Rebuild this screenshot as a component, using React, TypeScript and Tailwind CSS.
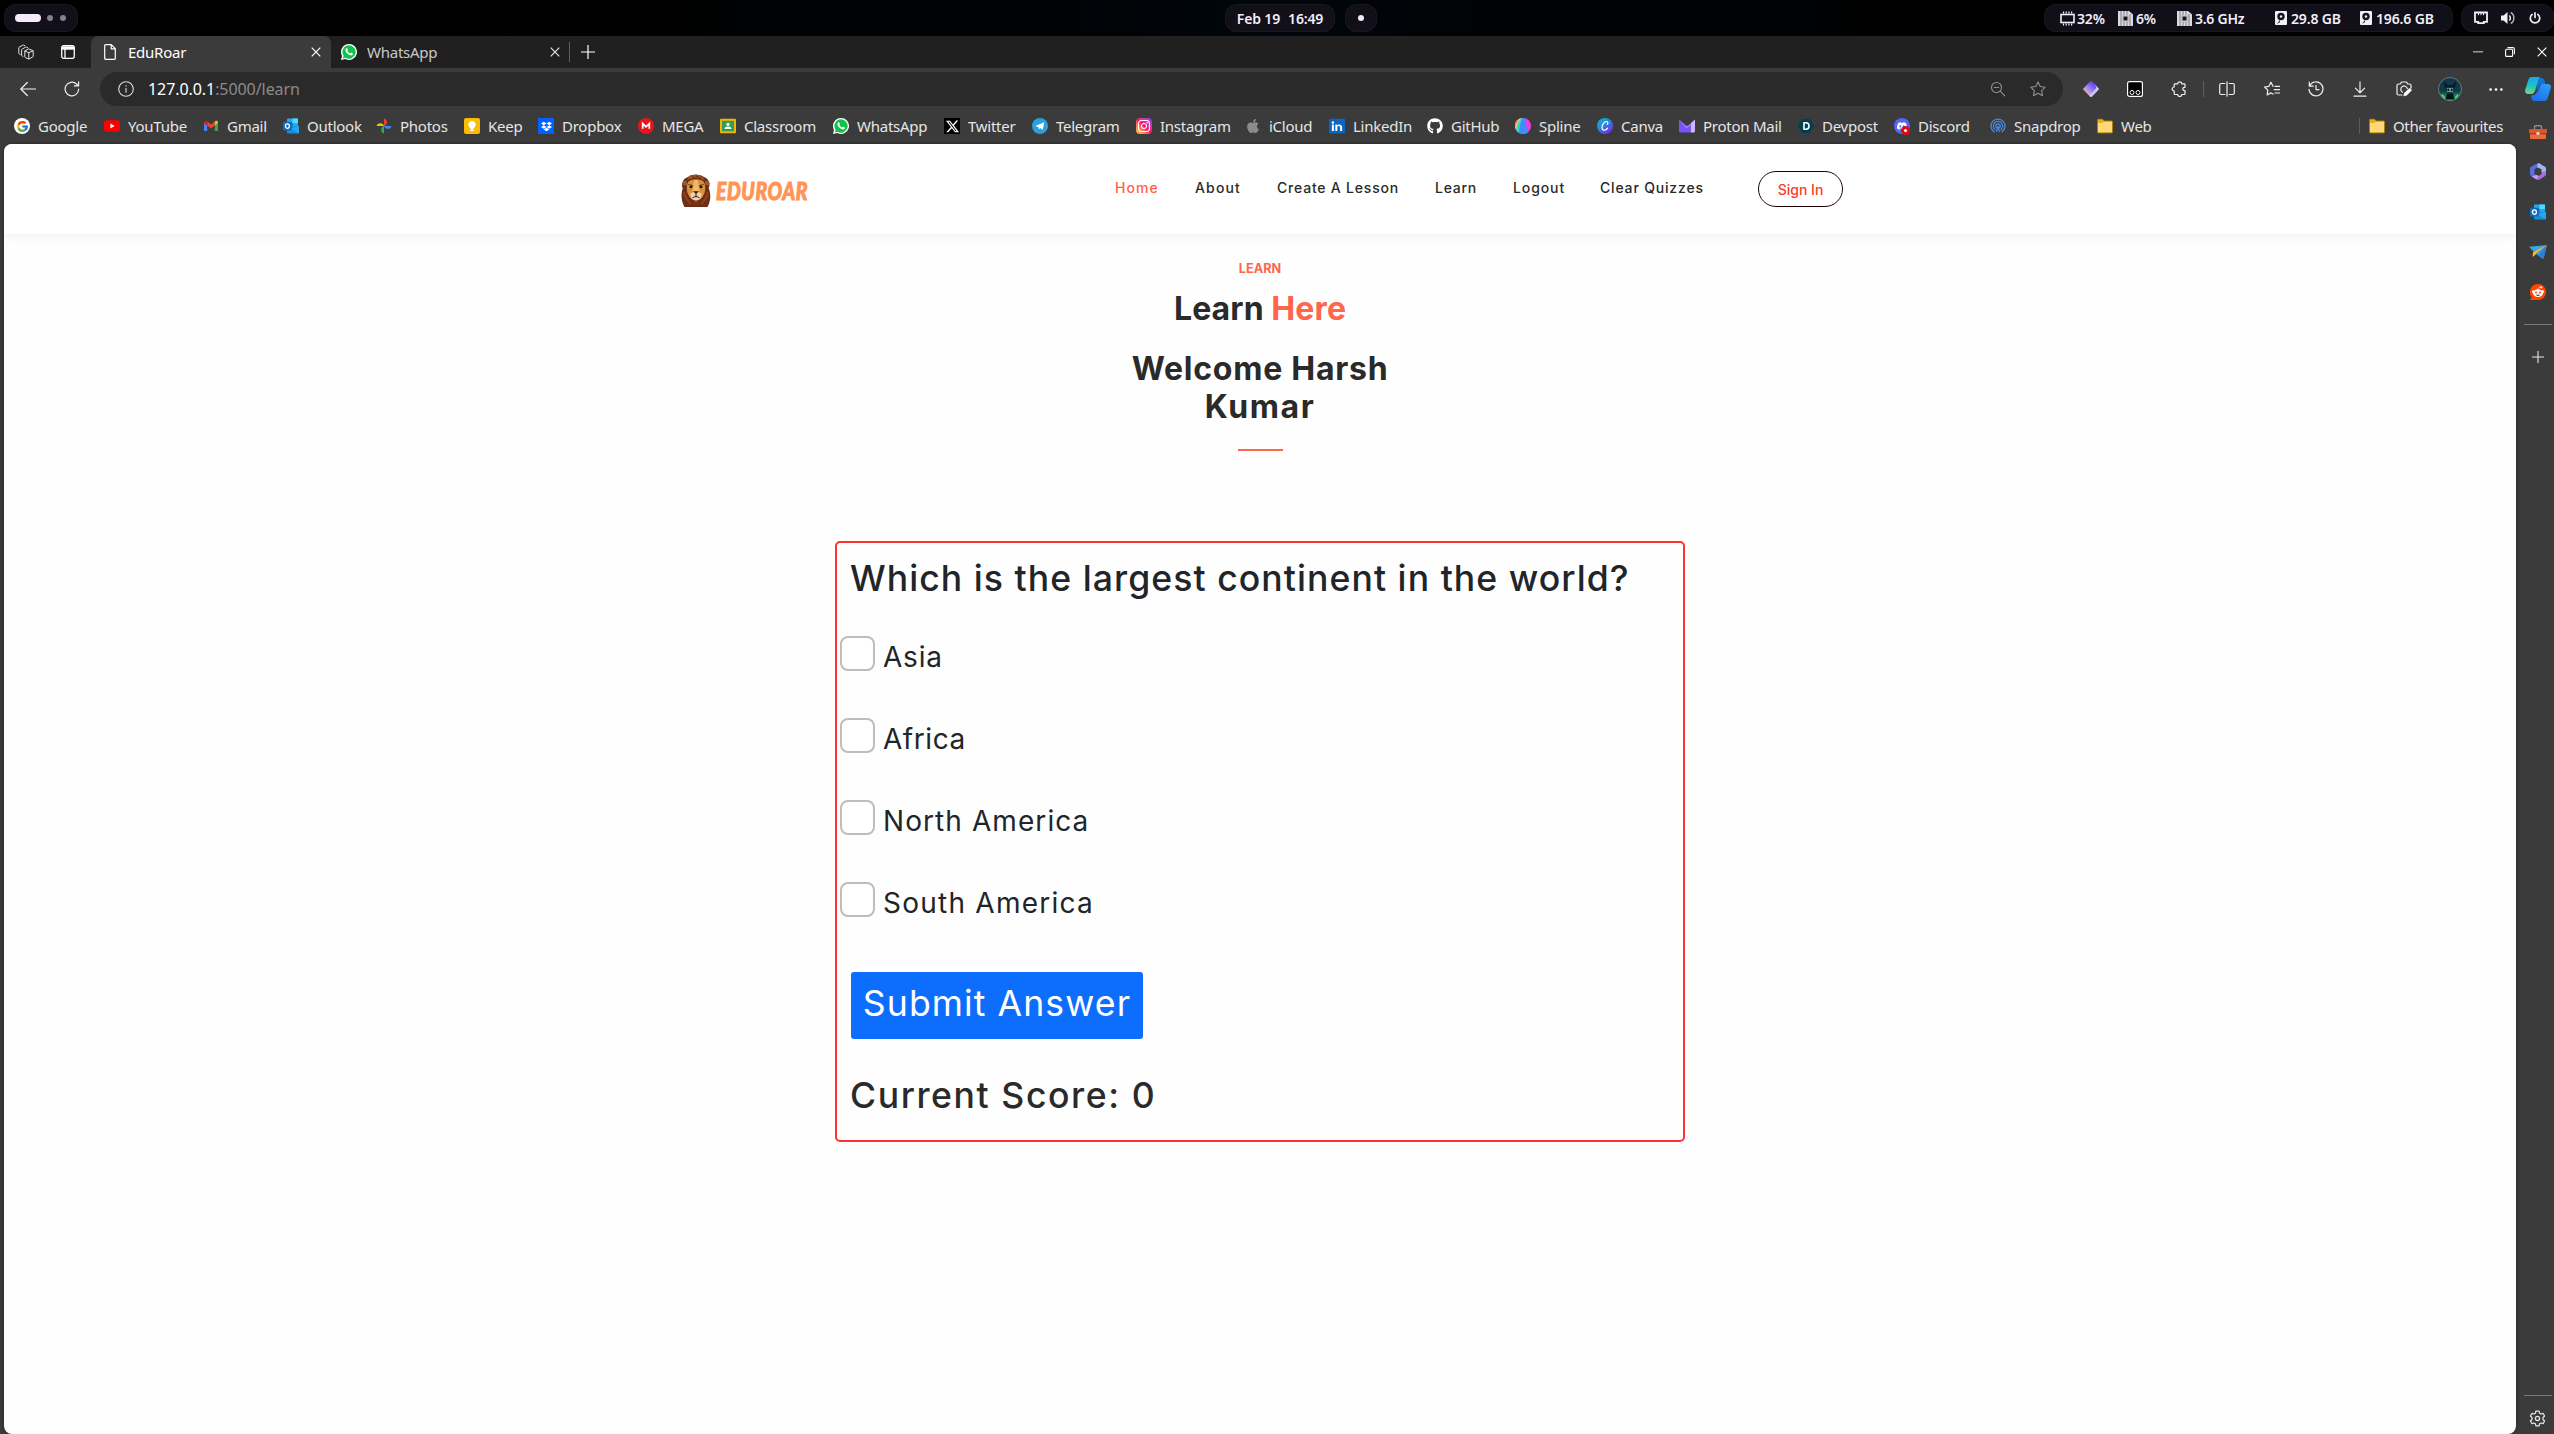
import type { ReactNode } from "react";
import { FcGoogle } from "react-icons/fc";
import { FaApple, FaGithub } from "react-icons/fa";
import { SiDropbox, SiX, SiInstagram, SiDiscord } from "react-icons/si";

/* ---------- generic stroke icon ---------- */
function Line({ children, size = "size-4", w = 1.2, className = "" }: { children: ReactNode; size?: string; w?: number; className?: string }) {
  return (
    <svg viewBox="0 0 16 16" fill="none" stroke="currentColor" strokeWidth={w} strokeLinecap="round" strokeLinejoin="round" className={`${size} shrink-0 ${className}`}>
      {children}
    </svg>
  );
}

/* ---------- brand icons ---------- */
const GoogleIcon = () => (
  <span className="flex size-4 items-center justify-center rounded-full bg-white">
    <FcGoogle className="size-[13px]" />
  </span>
);
const YouTubeIcon = () => (
  <svg viewBox="0 0 16 16" className="size-4">
    <rect y="2.2" width="16" height="11.6" rx="3" fill="#f00" />
    <path d="M6.4 5.6 10.6 8l-4.2 2.4z" fill="#fff" />
  </svg>
);
const GmailIcon = () => (
  <svg viewBox="0 0 16 16" className="size-4">
    <path d="M1 4v8.2c0 .6.4.9.9.9h2.3V7z" fill="#4285f4" />
    <path d="M15 4v8.2c0 .6-.4.9-.9.9h-2.3V7z" fill="#34a853" />
    <path d="M4.2 7.4V3.6L8 6.6l3.8-3v3.8L8 10.4z" fill="#ea4335" />
    <path d="M1 4.2c0-1.6 1.6-2 2.6-1.1l.6.5v3.8L1 5z" fill="#c5221f" />
    <path d="M15 4.2c0-1.6-1.6-2-2.6-1.1l-.6.5v3.8L15 5z" fill="#fbbc04" />
  </svg>
);
const OutlookIcon = ({ size = "size-4" }: { size?: string }) => (
  <svg viewBox="0 0 16 16" className={size}>
    <rect x="4" y="0.5" width="11" height="9" rx="0.8" fill="#28a8ea" />
    <rect x="9.5" y="0.5" width="5.5" height="4.5" fill="#50d9ff" />
    <rect x="4" y="5" width="5.5" height="4.5" fill="#0364b8" />
    <path d="M4 8.5 16 8v6.4c0 .7-.5 1.1-1.1 1.1H5.1c-.6 0-1.1-.4-1.1-1.1z" fill="#1490df" />
    <path d="M16 8v6.4c0 .3-.1.6-.3.8L7.5 10.6z" fill="#28a8ea" />
    <rect y="3.7" width="8.8" height="8.8" rx="0.8" fill="#0f6cbd" />
    <ellipse cx="4.4" cy="8.1" rx="2" ry="2.2" fill="none" stroke="#fff" strokeWidth="1.3" />
  </svg>
);
const PhotosIcon = () => (
  <svg viewBox="0 0 16 16" className="size-4">
    <path d="M8 8V.5A3.900 3.900 0 0 1 8 8z" fill="#ea4335" />
    <path d="M8 8h7.500A3.900 3.900 0 0 1 8 8z" fill="#4285f4" />
    <path d="M8 8v7.500A3.900 3.900 0 0 1 8 8z" fill="#34a853" />
    <path d="M8 8H.5A3.900 3.900 0 0 1 8 8z" fill="#fbbc04" />
  </svg>
);
const KeepIcon = () => (
  <svg viewBox="0 0 16 16" className="size-4">
    <rect width="16" height="16" rx="2" fill="#fbbc04" />
    <circle cx="8" cy="6.6" r="3.6" fill="#fff" />
    <rect x="6.1" y="9" width="3.8" height="1.8" fill="#fff" />
    <rect x="6.1" y="11.5" width="3.8" height="1.4" fill="#fff" />
  </svg>
);
const DropboxIcon = () => (
  <span className="flex size-4 items-center justify-center bg-[#0061ff]">
    <SiDropbox className="size-[11px] text-white" />
  </span>
);
const MegaIcon = () => (
  <svg viewBox="0 0 16 16" className="size-4">
    <circle cx="8" cy="8" r="8" fill="#e8141b" />
    <path d="M4.7 10.8V5.6L8 8.8l3.3-3.2v5.2" fill="none" stroke="#fff" strokeWidth="1.7" />
  </svg>
);
const ClassroomIcon = () => (
  <svg viewBox="0 0 16 16" className="size-4">
    <rect y="0.8" width="16" height="14.4" rx="1" fill="#f4b400" />
    <rect x="2" y="2.8" width="12" height="10.4" fill="#2f9e5b" />
    <circle cx="8" cy="6.3" r="1.6" fill="#fff" />
    <path d="M4.6 11c0-1.6 1.6-2.4 3.4-2.4s3.4.8 3.4 2.4z" fill="#fff" />
  </svg>
);
const WhatsAppIcon = () => (
  <svg viewBox="0 0 16 16" className="size-4">
    <path d="M8 0a8 8 0 1 1-3.7 15.1L0 16l1-4.1A8 8 0 0 1 8 0z" fill="#fff" />
    <path d="M8 1.3a6.7 6.7 0 1 1-3.4 12.5l-2.7.6.7-2.6A6.7 6.7 0 0 1 8 1.3z" fill="#12c24b" />
    <path d="M5.7 4.2c.4 0 .5.1.6.4l.6 1.3c0 .5-.7.8-.6 1.1.6 1.2 1.5 2 2.7 2.5.4.1.8-.9 1.2-.9l1.5.8c.5.3.1 1.3-.5 1.7-1 .7-2.9.1-4.6-1.3C5 8.400 4.200 6.700 4.500 5.500c.2-.7.7-1.300 1.200-1.300z" fill="#fff" />
  </svg>
);
const TwitterIcon = () => (
  <span className="flex size-4 items-center justify-center bg-black">
    <SiX className="size-[13px] text-white" />
  </span>
);
const TelegramIcon = () => (
  <svg viewBox="0 0 16 16" className="size-4">
    <circle cx="8" cy="8" r="8" fill="#2ba0da" />
    <path d="M3.300 7.900 12.200 4.200 10.800 12 8.200 10.100 6.900 11.400 6.500 9.200z" fill="#fff" />
  </svg>
);
const InstagramIcon = () => (
  <span className="flex size-4 items-center justify-center rounded-[4px] bg-gradient-to-tr from-[#ffc800] via-[#ff0069] to-[#8a1cf6]">
    <SiInstagram className="size-[12px] text-white" />
  </span>
);
const AppleIcon = () => <FaApple className="size-4 text-[#8b8b8b]" />;
const LinkedInIcon = () => (
  <svg viewBox="0 0 16 16" className="size-4">
    <rect y="0.8" width="16" height="14.8" rx="1" fill="#0a66c2" />
    <circle cx="3.900" cy="4.500" r="1.200" fill="#fff" />
    <path d="M2.900 6.500h2V13h-2zM6.300 6.500h1.900v1c.9-1.700 4.900-1.700 4.900 1.800V13h-2V9.700c0-2.200-2.800-2-2.800 0V13h-2z" fill="#fff" />
  </svg>
);
const GitHubIcon = () => <FaGithub className="size-4 text-white" />;
const SplineIcon = () => (
  <svg viewBox="0 0 16 16" className="size-4">
    <defs>
      <clipPath id="splineClip"><circle cx="8" cy="8" r="8" /></clipPath>
    </defs>
    <g clipPath="url(#splineClip)">
      <rect width="16" height="16" fill="#f03ce0" />
      <path d="M6 0h4l3 16H4z" fill="#3f8cff" />
      <path d="M5 0h2.500C5 5 4 10 4 16H0V0z" fill="#35d8d0" />
      <path d="M4 0h2C3 4 1.500 8 1 12l-1-2V0z" fill="#ffd23c" />
      <path d="M3 0h1.500C2 4 1 6 0 9V0z" fill="#ff5f9e" />
    </g>
  </svg>
);
const CanvaIcon = () => (
  <svg viewBox="0 0 16 16" className="size-4">
    <defs>
      <linearGradient id="canva" x1="0" y1="0" x2="0.7" y2="1">
        <stop offset="0" stopColor="#00c4cc" />
        <stop offset="0.55" stopColor="#2f7fe0" />
        <stop offset="1" stopColor="#7d2ae8" />
      </linearGradient>
    </defs>
    <circle cx="8" cy="8" r="8" fill="url(#canva)" />
    <path d="M10.300 6.300c.9-.8.8-2.800-.7-2.800-2.200 0-4.600 3-4.600 5.800 0 3.800 3.700 3.700 5.600.9" fill="none" stroke="#fff" strokeWidth="1.200" strokeLinecap="round" />
  </svg>
);
const ProtonIcon = () => (
  <svg viewBox="0 0 16 16" className="size-4">
    <path d="M0 1.500 7.200 8 12 6v8.500H1.500C.6 14.500 0 13.900 0 13z" fill="#7a52f5" />
    <path d="M0 1.500 6.600 7.600c.8.8 2 .8 2.800 0L16 1.500l-4 5.800-4.600 3.200z" fill="#9d7dff" />
    <path d="M12 5.200 16 1.500V13c0 .9-.6 1.500-1.500 1.500H12z" fill="#c9b8ff" />
  </svg>
);
const DevpostIcon = () => (
  <svg viewBox="0 0 16 16" className="size-4">
    <path d="M4.200 1h7.600L16 8l-4.200 7H4.200L0 8z" fill="#003e54" />
    <path d="M6 4.800h1.900c2.100 0 3.100 1.300 3.100 3.200s-1 3.200-3.100 3.200H6z" fill="none" stroke="#fff" strokeWidth="1.600" />
  </svg>
);
const DiscordIcon = () => (
  <span className="relative flex size-4 items-center justify-center rounded-full bg-[#5865f2]">
    <SiDiscord className="size-[10px] text-white" />
    <span className="absolute right-0 -bottom-px flex size-[9px] items-center justify-center rounded-full bg-[#e00b12]">
      <span className="size-[3px] rounded-full bg-white" />
    </span>
  </span>
);
const SnapdropIcon = () => (
  <svg viewBox="0 0 16 16" fill="none" stroke="#4a8be6" strokeWidth="1.200" strokeLinecap="round" className="size-4">
    <path d="M4 13.800a7 7 0 1 1 8 0" />
    <path d="M5 11.500a4.600 4.600 0 1 1 6 0" />
    <path d="M6.400 9.600a2.200 2.200 0 1 1 3.200 0" />
    <path d="M7.900 8.400 6.600 13.500M8.100 8.400l1.300 5.100" />
  </svg>
);
const FolderIcon = () => (
  <svg viewBox="0 0 16 16" className="size-4">
    <path d="M.5 14V2.200c0-.5.400-.9.900-.9h4.200l1.600 1.700h7.300c.6 0 1 .4 1 1V14c0 .5-.4.900-.9.900H1.400c-.5 0-.9-.4-.9-.9z" fill="#ffd977" stroke="#a87c0c" />
    <path d="M1 5V2.300c0-.3.200-.5.500-.5h4l1.500 1.700L5.600 5z" fill="#e8b016" />
  </svg>
);

const bookmarks: { label: string; icon: () => ReactNode; w: string }[] = [
  { label: "Google", icon: GoogleIcon, w: "w-[90px]" },
  { label: "YouTube", icon: YouTubeIcon, w: "w-[99px]" },
  { label: "Gmail", icon: GmailIcon, w: "w-[80px]" },
  { label: "Outlook", icon: OutlookIcon, w: "w-[93px]" },
  { label: "Photos", icon: PhotosIcon, w: "w-[88px]" },
  { label: "Keep", icon: KeepIcon, w: "w-[74px]" },
  { label: "Dropbox", icon: DropboxIcon, w: "w-[100px]" },
  { label: "MEGA", icon: MegaIcon, w: "w-[82px]" },
  { label: "Classroom", icon: ClassroomIcon, w: "w-[113px]" },
  { label: "WhatsApp", icon: WhatsAppIcon, w: "w-[111px]" },
  { label: "Twitter", icon: TwitterIcon, w: "w-[88px]" },
  { label: "Telegram", icon: TelegramIcon, w: "w-[104px]" },
  { label: "Instagram", icon: InstagramIcon, w: "w-[109px]" },
  { label: "iCloud", icon: AppleIcon, w: "w-[84px]" },
  { label: "LinkedIn", icon: LinkedInIcon, w: "w-[98px]" },
  { label: "GitHub", icon: GitHubIcon, w: "w-[88px]" },
  { label: "Spline", icon: SplineIcon, w: "w-[82px]" },
  { label: "Canva", icon: CanvaIcon, w: "w-[82px]" },
  { label: "Proton Mail", icon: ProtonIcon, w: "w-[119px]" },
  { label: "Devpost", icon: DevpostIcon, w: "w-[96px]" },
  { label: "Discord", icon: DiscordIcon, w: "w-[96px]" },
  { label: "Snapdrop", icon: SnapdropIcon, w: "w-[107px]" },
  { label: "Web", icon: FolderIcon, w: "w-[60px]" },
];

/* ---------- desktop bar ---------- */
const MemoryIcon = () => (
  <svg viewBox="0 0 15 15" className="size-[15px]" fill="none" stroke="#f2eef8">
    <rect x="1" y="3.500" width="13" height="8" strokeWidth="1.600" />
    <path d="M3.500 0.500v2M6.200 0.500v2M8.900 0.500v2M11.600 0.500v2M3.500 12.500v2M6.200 12.500v2M8.900 12.500v2M11.600 12.500v2" strokeWidth="1.200" />
  </svg>
);
const CpuIcon = () => (
  <svg viewBox="0 0 15 15" className="size-[15px]">
    <path d="M0 0h11l4 3.500V15H0z" fill="#dcd9e0" />
    <path d="M3 0v15M6 0v4M9 0v4M12 3v12M6 11v4M9 11v4" stroke="#77747c" strokeWidth="0.900" />
    <rect x="4.500" y="4.500" width="6" height="6" fill="#a9a6ae" />
    <rect x="5.700" y="5.700" width="3.600" height="3.600" fill="#15131b" />
  </svg>
);
const DiskIcon = () => (
  <svg viewBox="0 0 12 14" className="h-[14px] w-3">
    <rect width="12" height="14" rx="1" fill="#f2eef8" />
    <circle cx="6" cy="5.500" r="3.700" fill="#15131b" />
    <circle cx="6" cy="5.500" r="1.200" fill="#f2eef8" />
    <path d="M2 13l3-4v2z" fill="#15131b" />
  </svg>
);

const pill = "flex h-7 items-center rounded-[12px] bg-[#110f18] ring-1 ring-[#19171f] ring-inset";

function DesktopBar() {
  return (
    <div className="flex h-9 items-center bg-gradient-to-r from-black via-[#00060b] to-black text-[14px] font-semibold text-[#f2eef8]">
      <div className={`${pill} ml-1 w-[74px] pl-[11px]`}>
        <span className="h-2 w-[26px] rounded-full bg-[#f4eafc]" />
        <span className="ml-[6px] size-[6px] rounded-full bg-[#85818d]" />
        <span className="ml-[7px] size-[6px] rounded-full bg-[#85818d]" />
      </div>
      <div className={`${pill} ml-[1147px] w-[110px] justify-center gap-2 tracking-[-0.15px]`}>
        <span>Feb 19</span>
        <span>16:49</span>
      </div>
      <div className={`${pill} ml-[10px] w-8 justify-center`}>
        <span className="size-[6px] rounded-full bg-[#f4eafc]" />
      </div>
      <div className={`${pill} ml-auto w-[409px] pl-4 tracking-[-0.15px]`}>
        <div className="flex w-[58px] items-center gap-[2px]"><MemoryIcon />32%</div>
        <div className="flex w-[59px] items-center gap-[3px]"><CpuIcon />6%</div>
        <div className="flex w-[98px] items-center gap-[3px] tracking-[-0.25px]"><CpuIcon />3.6 GHz</div>
        <div className="flex w-[85px] items-center gap-1"><DiskIcon />29.8 GB</div>
        <div className="flex items-center gap-1"><DiskIcon />196.6 GB</div>
      </div>
      <div className={`${pill} ml-2 w-[93px] pl-[13px]`}>
        <svg viewBox="0 0 14 14" className="size-[14px]" fill="none" stroke="#f2eef8" strokeWidth="1.800">
          <path d="M1 1.500h12v9.300H9.800v1.400H4.200v-1.400H1z" />
          <path d="M4.500 2v2.200M7 2v2.200M9.500 2v2.200" strokeWidth="1" />
        </svg>
        <svg viewBox="0 0 14 14" className="ml-[13px] size-[14px]" fill="none" stroke="#f2eef8" strokeWidth="1.500">
          <path d="M0 4.500h2.500L6.500 1v12L2.500 9.500H0z" fill="#f2eef8" stroke="none" />
          <path d="M8.300 4.500a3.500 3.500 0 0 1 0 5" />
          <path d="M9.700 1.500c4.200 2 4.200 9 0 11" opacity="0.700" />
        </svg>
        <svg viewBox="0 0 12 12" className="ml-[14px] size-3" fill="none" stroke="#f2eef8" strokeWidth="1.700" strokeLinecap="round">
          <path d="M6 .9v4.600M3.200 2.400a4.700 4.700 0 1 0 5.600 0" />
        </svg>
      </div>
    </div>
  );
}

/* ---------- browser chrome ---------- */
const CloseIcon = ({ className = "" }: { className?: string }) => (
  <svg viewBox="0 0 10 10" className={`size-[10px] ${className}`} stroke="currentColor" strokeWidth="1.200" fill="none">
    <path d="M.7.700l8.600 8.600M9.300.700.700 9.300" />
  </svg>
);

function TabStrip() {
  return (
    <div className="flex h-8 items-center bg-[#202020] text-[15px] tracking-[-0.25px] text-[#e4e4e4]">
      <Line className="ml-[18px]" w={1}>
        <path d="M7 6.800 10.500 4.900l4.300 1.700c.3.100.4.300.4.600v4.900c0 .4-.2.700-.6.900l-3.400 1.900c-.3.200-.6.200-.9 0l-2.900-1.300c-.4-.2-.6-.5-.6-.9V7.500M6.900 7l3.900 1.700 4.200-1.800M10.800 8.900v5.900" />
        <path d="M5 12.500 4.200 12c-.4-.2-.6-.5-.6-.9V6c0-.4.200-.7.600-.9L7.500 3.200c.3-.2.600-.2.900 0l1.300.5" />
        <path d="M2.300 10.500 1.400 10c-.4-.2-.6-.5-.6-.9V4c0-.4.200-.7.600-.9L4.700 1.200c.3-.2.600-.2.900 0l1.300.5" />
      </Line>
      <svg viewBox="0 0 14 14" className="ml-[27px] size-[14px]" fill="none" stroke="#fff" strokeWidth="1.300">
        <rect x=".7" y=".7" width="12.600" height="12.600" rx="2" />
        <path d="M1 3h12" strokeWidth="3.400" />
        <path d="M4 4v9" />
      </svg>
      <div className="ml-4 flex h-8 w-60 items-center rounded-t-[7px] bg-[#3b3b3b] pl-[13px] text-white">
        <svg viewBox="0 0 12 16" className="h-4 w-3" fill="none" stroke="currentColor" strokeWidth="1.200" strokeLinejoin="round">
          <path d="M.7 1.500c0-.5.300-.8.800-.8h5.800l4 4v9.800c0 .5-.3.800-.8.800h-9c-.5 0-.8-.3-.8-.8zM7.200.8v4h4" />
        </svg>
        <span className="ml-3">EduRoar</span>
        <CloseIcon className="mr-[10px] ml-auto" />
      </div>
      <div className="flex h-8 w-[238px] items-center pl-[10px]">
        <WhatsAppIcon />
        <span className="ml-[10px] text-[#c9c9c9]">WhatsApp</span>
        <CloseIcon className="mr-[9px] ml-auto" />
      </div>
      <span className="h-5 w-px bg-[#5e5e5e]" />
      <svg viewBox="0 0 14 14" className="ml-[11px] size-[14px]" stroke="#fff" strokeWidth="1.200"><path d="M7 0v14M0 7h14" /></svg>
      <svg viewBox="0 0 10 2" className="ml-auto h-[2px] w-[10px]"><rect width="10" height="1.500" fill="#999" /></svg>
      <svg viewBox="0 0 10 10" className="ml-[22px] size-[10px]" fill="none" stroke="#fff" strokeWidth="1.100">
        <rect x=".6" y="2.200" width="7" height="7.200" rx="1" />
        <path d="M2.500.6h5.400c.9 0 1.500.6 1.500 1.500v5.200" />
      </svg>
      <CloseIcon className="mr-[7px] ml-[22px] text-white" />
    </div>
  );
}

const CopilotIcon = () => (
  <svg viewBox="0 0 26 24" className="h-6 w-[26px]">
    <defs>
      <linearGradient id="cpA" x1="0.300" y1="0" x2="0.200" y2="1">
        <stop offset="0" stopColor="#1aa9e8" />
        <stop offset="0.500" stopColor="#1fc3c4" />
        <stop offset="1" stopColor="#6fdc78" />
      </linearGradient>
      <linearGradient id="cpB" x1="0.800" y1="0" x2="0.200" y2="1">
        <stop offset="0" stopColor="#2f9bf5" />
        <stop offset="1" stopColor="#1a6ff0" />
      </linearGradient>
    </defs>
    <path d="M12 1h4.500c1.500 0 2.500 1 3 2.500L20.500 7H15l-3.500 9z" fill="#1173d4" />
    <path d="M7 0h8.500c-1.200.5-1.700 1.500-2.200 3L10 14c-.8 2-1.800 3-4 3H3c-2.500 0-3.500-2-2.700-4.500L3.500 2.500C4 1 5 0 7 0z" fill="url(#cpA)" />
    <path d="M19 24h-9c-2 0-3-1-3.500-2.500L6 18.500c3 0 5-1 6-3.500l2-5.500C14.800 7.500 16 7 18 7h5c2.500 0 3.500 2 2.700 4.500L22.500 21.500C22 23 21 24 19 24z" fill="url(#cpB)" />
    <path d="M12.200 15.500 15 8" stroke="#1a3f7a" strokeWidth=".8" />
  </svg>
);

function Toolbar() {
  return (
    <div className="flex h-[42px] items-center pr-[3px] text-[#f0f0f0]">
      <Line className="ml-5" w={1.200}><path d="M15.500 8H.8M7.300 1.500.8 8l6.500 6.500" /></Line>
      <Line className="ml-7" w={1.200}><path d="M14.700 8a6.800 6.800 0 1 1-2.200-5l1.900 1.800M14.600.8v4.100h-4.200" /></Line>
      <div className="ml-5 flex h-[34px] w-[1963px] items-center rounded-full bg-[#2a2a2a] pl-[18px] text-[16px] tracking-[-0.07px]">
        <Line className="text-[#ddd]" w={1.100}><circle cx="8" cy="8" r="7.300" /><path d="M8 7.300v4M8 4.600v.3" /></Line>
        <span className="ml-[14px] text-white">127.0.0.1<span className="text-[#8a8a8a]">:5000/learn</span></span>
        <Line className="ml-auto text-[#8f8f8f]" w={1.100}><circle cx="6.500" cy="6.500" r="5" /><path d="m10.200 10.200 4.600 4.600M4.300 6.500h4.400" /></Line>
        <Line className="mr-[17px] ml-6 text-[#8f8f8f]" w={1.100}><path d="m8 .9 2.200 4.600 5 .7-3.600 3.500.9 5L8 12.300l-4.500 2.400.9-5L.8 6.200l5-.7z" /></Line>
      </div>
      <svg viewBox="0 0 16 16" className="ml-5 size-4">
        <defs>
          <linearGradient id="dm" x1="0.800" y1="0.200" x2="0.200" y2="0.900">
            <stop offset="0" stopColor="#5b3df0" />
            <stop offset="0.500" stopColor="#9a80f8" />
            <stop offset="1" stopColor="#ffc2a8" />
          </linearGradient>
        </defs>
        <path d="M7 .5c.6-.6 1.400-.6 2 0l6.500 6.700c.5.500.5 1.100 0 1.600L9 15.500c-.6.600-1.400.6-2 0L.5 8.800C0 8.300 0 7.700.5 7.200z" fill="url(#dm)" />
        <path d="M10.500 2 15.500 7.200c.5.500.5 1.100 0 1.600L9 15.500c-.6.600-1.400.6-2 0l-.8-.8L12.500 8c1-1 1-2 .2-3z" fill="#cfc2fa" />
      </svg>
      <svg viewBox="0 0 16 16" className="ml-7 size-4">
        <rect x=".6" y=".6" width="14.800" height="14.800" rx="2" fill="#000" stroke="#fff" strokeWidth="1.200" />
        <circle cx="5" cy="11.500" r="2" fill="none" stroke="#fff" />
        <circle cx="11" cy="11.500" r="2" fill="none" stroke="#fff" />
      </svg>
      <Line className="ml-7" w={1.200}>
        <path d="M4 2.800h2.700a2 2 0 0 1 4 0h2.500c.5 0 .8.300.8.800v2.700h-.5a1.700 1.700 0 0 0 0 3.400h.5v3c0 .5-.3.800-.8.800h-2.500a2 2 0 0 1-4 0H4c-.5 0-.8-.3-.8-.8V10a2 2 0 0 1 0-4V3.600c0-.5.3-.8.800-.8z" />
      </Line>
      <span className="ml-4 h-4 w-px bg-[#606060]" />
      <Line className="ml-[15px]" w={1.200}><path d="M8 .8v14.400M5.800 2.500H2.200c-.9 0-1.500.6-1.500 1.500v8c0 .9.600 1.500 1.500 1.500h3.600M10.200 2.500h3.600c.9 0 1.500.6 1.500 1.500v8c0 .9-.6 1.500-1.500 1.500h-3.600" /></Line>
      <Line className="ml-[29px]" w={1.200}><path d="M9 5.300 6.900 1.200 4.900 5.300l-4.300.7 3.200 3.200-.7 4.800 3.800-2.100 2.100 1.200M11 5.400h4.500M10.200 8.700h5.300M11 12h4.500" /></Line>
      <Line className="ml-7" w={1.200}><path d="M1.300 1.200v4h4M1.500 5.200A7 7 0 1 1 1 8.300M8 4.300v4.300h3" /></Line>
      <Line className="ml-7" w={1.200}><path d="M8 .8v10.800M3.400 7.200 8 11.800l4.600-4.600M2 15.200h12" /></Line>
      <Line className="ml-7" w={1.200}>
        <path d="M6 14H2.500C1.500 14 1 13.400 1 12.500v-8C1 3.600 1.500 3 2.500 3h1.800L5.500 1h5l1.200 2h1.800c1 0 1.500.6 1.500 1.500V7" />
        <path d="M6.500 11.200a3.300 3.300 0 1 1 4.800-3.500" />
        <path d="m8 14.600.7-2.400 5-4.600 1.500 1.600-4.800 4.800z" fill="#fff" />
      </Line>
      <svg viewBox="0 0 24 24" className="ml-[26px] size-6">
        <defs>
          <linearGradient id="av" x1="0" y1="0" x2="0" y2="1">
            <stop offset="0" stopColor="#15344c" />
            <stop offset="0.600" stopColor="#103c44" />
            <stop offset="1" stopColor="#2fc06c" />
          </linearGradient>
        </defs>
        <circle cx="12" cy="12" r="11.500" fill="url(#av)" stroke="#7a8a90" strokeWidth=".8" />
        <path d="M6.500 4c-1 4 .5 6 1.500 7-.8 3 .5 5 4 5s4.800-2 4-5c1-1 2.500-3 1.500-7-1 2-2 3.500-3.200 4.200H9.700C8.500 7.500 7.500 6 6.500 4z" fill="#0a1828" />
        <path d="M8.800 10.800h6.400v4.400H8.800z" fill="#4fa59a" />
        <path d="M10.300 11.800v2.200M13.700 11.800v2.200" stroke="#051015" strokeWidth="1.500" />
        <path d="M9 16.500h6l1.500 6h-9z" fill="#07131a" />
        <path d="M4 17.500l2.500 3.500M20 17.500l-2.500 3.500" stroke="#42e07b" strokeWidth="1.500" />
      </svg>
      <svg viewBox="0 0 14 3" className="ml-[27px] h-[3px] w-[14px]" fill="#fff">
        <circle cx="1.600" cy="1.500" r="1.300" /><circle cx="7" cy="1.500" r="1.300" /><circle cx="12.400" cy="1.500" r="1.300" />
      </svg>
      <div className="ml-auto"><CopilotIcon /></div>
    </div>
  );
}

function BookmarksBar() {
  return (
    <div className="flex h-[34px] items-center pb-[2px] pl-[14px] text-[15px] tracking-[-0.25px] text-[#e6e6e6]">
      {bookmarks.map(({ label, icon: Icon, w }) => (
        <div key={label} className={`flex shrink-0 items-center gap-2 whitespace-nowrap ${w}`}>
          <Icon />
          <span>{label}</span>
        </div>
      ))}
      <div className="mr-[14px] ml-auto flex items-center">
        <span className="h-4 w-px bg-[#5c5c5c]" />
        <span className="ml-[9px]"><FolderIcon /></span>
        <span className="ml-2 w-[109px] tracking-[-0.35px] whitespace-nowrap">Other favourites</span>
      </div>
    </div>
  );
}

function Sidebar() {
  return (
    <aside className="flex w-[38px] shrink-0 flex-col items-center pl-[5px]">
      <svg viewBox="0 0 18 14" className="-mt-[11px] h-[14px] w-[18px] shrink-0">
        <path d="M5.500 4V2c0-.8.500-1.300 1.300-1.300h4.400c.8 0 1.300.5 1.300 1.300v2" fill="none" stroke="#8d8d8d" strokeWidth="1.400" />
        <rect y="4" width="18" height="4.500" rx="1" fill="#e2552c" />
        <rect x="1" y="8" width="16" height="6" rx="1" fill="#ea6a3e" />
        <rect x="1" y="8" width="16" height="1.400" fill="#b93a18" />
        <circle cx="9" cy="8.400" r="1.700" fill="#d9d9d9" />
      </svg>
      <svg viewBox="0 0 16 18" className="mt-6 h-[18px] w-4 shrink-0">
        <path d="M5 1.500 8.500.3 7 4.500 4.500 6.200v5.500L7 13l-3 2-3.200-2.200C.2 12.300 0 11.900 0 11.200V5.500c0-.8.300-1.300 1-1.700z" fill="#5b6be0" />
        <path d="M7.500.5c.9-.4 1.500-.4 2.300.1L15 3.800c.7.400 1 .9 1 1.700v6L11.500 9V6.300L7 4.200z" fill="#9fb4f2" />
        <path d="M16 8v3.300c0 .7-.3 1.200-.9 1.600l-5.700 3.700c-.9.600-1.800.6-2.700 0L2 13.500l3-2 3.500 1.500 3-1.800V9z" fill="#a96fe0" />
        <path d="M2 13.500 7 12l1.500 1-2 3.400z" fill="#c49cf0" />
      </svg>
      <div className="mt-[23px]"><OutlookIcon size="size-4" /></div>
      <svg viewBox="0 0 18 14" className="mt-[25px] h-[14px] w-[18px] shrink-0">
        <path d="M0 1.800 18 0 5.500 7.500z" fill="#3fa5e0" />
        <path d="M18 0 4 7.200 3.500 12 8 8.500z" fill="#f8b92a" />
        <path d="M18 0 6.500 8.500l7 5c.5.300.8.200 1-.3z" fill="#3d9be8" />
        <path d="M18 0 9 10.200l4.500 3.300c.5.300.8.200 1-.3z" fill="#2f7fd0" />
      </svg>
      <svg viewBox="0 0 16 16" className="mt-[25px] size-4 shrink-0">
        <path d="M8 0a8 8 0 1 1 0 16H.6c-.5 0-.7-.5-.3-.9L2 13.400A8 8 0 0 1 8 0z" fill="#ff4500" />
        <circle cx="11.200" cy="3.300" r="1.100" fill="#fff" />
        <path d="M8 5.200c.2-1.400 1-2 2.600-1.900" stroke="#fff" strokeWidth=".7" fill="none" />
        <circle cx="3.400" cy="7.700" r="1.400" fill="#fff" /><circle cx="12.600" cy="7.700" r="1.400" fill="#fff" />
        <ellipse cx="8" cy="9.200" rx="4.900" ry="3.900" fill="#fff" />
        <circle cx="6" cy="8.600" r="1" fill="#ff4500" /><circle cx="10" cy="8.600" r="1" fill="#ff4500" />
        <path d="M6 10.800h4c-.3 1.300-3.700 1.300-4 0z" fill="#1b1b1b" />
      </svg>
      <span className="mt-[24px] h-px w-7 shrink-0 bg-[#777]" />
      <svg viewBox="0 0 12 12" className="mt-[26px] size-3 shrink-0" stroke="#e8e8e8" strokeWidth="1.100"><path d="M6 0v12M0 6h12" /></svg>
      <span className="mt-auto h-px w-7 shrink-0 bg-[#777]" />
      <svg viewBox="0 0 18 18" className="mt-[14px] mb-[7px] size-[17px] shrink-0" fill="none" stroke="#e8e8e8" strokeWidth="1.300" strokeLinejoin="round">
        <path d="M7.300 1.200h3.400l.5 2.200 1.400.8 2.200-.7 1.700 2.900-1.700 1.600v2l1.700 1.600-1.700 2.900-2.200-.7-1.400.8-.5 2.200H7.300l-.5-2.200-1.400-.8-2.200.7-1.700-2.900L3.200 10V8L1.500 6.400l1.700-2.900 2.200.7 1.400-.8z" />
        <circle cx="9" cy="9" r="2.200" />
      </svg>
    </aside>
  );
}

/* ---------- EduRoar page ---------- */
const LionIcon = () => (
  <svg viewBox="0 0 30 33" className="h-[33px] w-[30px]">
    <path d="M7 3C10 .3 19-.2 23 3c2.500.8 4.500 2.500 5 5.500.8 2 .6 4-.4 5.500C30 19 30 27 26.500 33h-23C.5 28-.5 20 1.800 14.500.6 12.500.8 10 1.700 8 2.500 5.500 4.500 3.500 7 3z" fill="#6b2f14" />
    <path d="M8 2.500c3-2.500 10-2.800 14 .5l1.500 3c-5-2.500-13-2.500-17.500 0z" fill="#9c5524" />
    <path d="M11 1.500 14 5l2-3.500L18.500 5l2-2.500" stroke="#5e2a12" strokeWidth=".9" fill="none" />
    <circle cx="3.800" cy="9.200" r="2.400" fill="#9a5a2c" /><circle cx="26.200" cy="9.200" r="2.400" fill="#9a5a2c" />
    <path d="M7.500 7.500c4-3 11-3 15 0 2 3 2.300 7.500 1 11.500-1.500 4-4.500 7.500-8.500 7.500s-7-3.500-8.500-7.500c-1.300-4-1-8.500 1-11.500z" fill="#d68f3e" />
    <path d="M13 6h4l1.500 11h-7z" fill="#f0b864" />
    <path d="M9.500 19.500c2-1.800 9-1.800 11 0 .5 4-2 7-5.500 7s-6-3-5.500-7z" fill="#ecd3b0" />
    <path d="M12.500 17.300h5L15 20.500z" fill="#3a1c12" />
    <path d="M15 20v2.300M11.500 23.800c2-1.600 5-1.600 7 0" stroke="#3a1c12" strokeWidth="1" fill="none" />
    <path d="M7.500 10.500 12 11.800M22.500 10.500 18 11.800" stroke="#6b3515" strokeWidth="1.100" />
    <ellipse cx="10" cy="13" rx="1.500" ry="1.300" fill="#2c160c" /><ellipse cx="20" cy="13" rx="1.500" ry="1.300" fill="#2c160c" />
    <path d="M3 18c1 5 3.500 9 7 12M27 18c-1 5-3.500 9-7 12" stroke="#943f1a" strokeWidth="2" fill="none" />
    <path d="M11 27l4 5 4-5z" fill="#7e3616" />
  </svg>
);

const navItems = [
  { label: "Home", cls: "w-20 text-[#ff5f4a] tracking-[1.05px]" },
  { label: "About", cls: "w-[82px] tracking-[1.15px]" },
  { label: "Create A Lesson", cls: "w-[158px] tracking-[0.79px]" },
  { label: "Learn", cls: "w-[78px] tracking-[0.75px]" },
  { label: "Logout", cls: "w-[87px] tracking-[0.9px]" },
  { label: "Clear Quizzes", cls: "w-[158px] tracking-[0.82px]" },
];

const options = [
  { label: "Asia", cls: "tracking-[0.8px]" },
  { label: "Africa", cls: "tracking-[0.55px]" },
  { label: "North America", cls: "tracking-[1.08px]" },
  { label: "South America", cls: "tracking-[1.24px]" },
];

function Page() {
  return (
    <main className="flex grow flex-col overflow-hidden rounded-[8px] bg-[#fefefe] font-['Inter',sans-serif] shadow-[0_0_3px_rgba(0,0,0,0.5)]">
      <header className="flex h-[90px] shrink-0 items-center bg-white pl-[677px] shadow-[0_1px_10px_rgba(0,0,0,0.08)]">
        <div className="mt-[3px] flex w-[434px] items-center">
          <LionIcon />
          <span className="ml-[5px] origin-left scale-x-[0.76] font-['Lato',sans-serif] text-[25.5px] leading-none font-black tracking-[0.8px] text-[#ff9454] italic [-webkit-text-stroke:1.1px_#ff9454]">EDUROAR</span>
        </div>
        <nav className="-mt-[2px] flex text-[14px] leading-5 font-medium text-[#2a2a2a]">
          {navItems.map((n) => (
            <a key={n.label} className={`whitespace-nowrap ${n.cls}`}>{n.label}</a>
          ))}
        </nav>
        <button className="flex h-9 w-[85px] items-center justify-center rounded-[18px] border border-[#1f0508] text-[14px] font-medium text-[#fa3c26]">Sign In</button>
      </header>

      <section className="flex flex-col items-center pt-[25px] text-[#2a2a2a]">
        <h6 className="text-[12.700px] leading-5 font-bold text-[#ff6650]">LEARN</h6>
        <h2 className="mt-[11px] text-[32px] leading-[38px] font-bold tracking-[0.1px]">
          Learn <span className="text-[#ff664c]">Here</span>
        </h2>
        <h2 className="mt-[22px] text-center text-[32px] leading-[38px] font-bold">
          <span className="block tracking-[0.75px]">Welcome Harsh</span>
          <span className="block tracking-[1.6px]">Kumar</span>
        </h2>
        <div className="mt-[23px] h-[2px] w-[45px] bg-[#ff664c]" />
      </section>

      <section className="mx-auto mt-[90px] flex h-[601px] w-[850px] shrink-0 flex-col rounded-[5px] border-2 border-[#ff3131]">
        <h1 className="h-[72px] pl-[13px] text-[35.600px] leading-[71px] font-medium tracking-[1.06px] whitespace-nowrap text-[#212529]">Which is the largest continent in the world?</h1>
        {options.map((o) => (
          <label key={o.label} className="flex h-[82px] items-center text-[28px] text-[#212529]">
            <span className="mt-[-5px] ml-[3px] h-[35px] w-[35px] rounded-[8px] border-[2.500px] border-[#bdbdbd] bg-white" />
            <span className={`mt-px ml-2 ${o.cls}`}>{o.label}</span>
          </label>
        ))}
        <button className="mt-[29px] ml-[14px] h-[67px] w-[292px] rounded-[3px] bg-[#0d6efd] pb-[3px] text-[35.600px] tracking-[1.100px] whitespace-nowrap text-white">Submit Answer</button>
        <h1 className="mt-[28px] h-[57px] pl-[13px] text-[35.600px] leading-[57px] font-medium tracking-[1.580px] text-[#2a2a2a]">Current Score: 0</h1>
      </section>
    </main>
  );
}

export default function App() {
  return (
    <div className="flex h-[1434px] w-[2554px] flex-col overflow-hidden bg-[#3b3b3b] font-['Noto_Sans',sans-serif]">
      <DesktopBar />
      <TabStrip />
      <Toolbar />
      <div className="flex grow">
        <div className="flex w-[2516px] shrink-0 flex-col">
          <BookmarksBar />
          <div className="flex grow pl-1"><Page /></div>
        </div>
        <div className="flex w-[38px] pt-[26px]"><Sidebar /></div>
      </div>
    </div>
  );
}
